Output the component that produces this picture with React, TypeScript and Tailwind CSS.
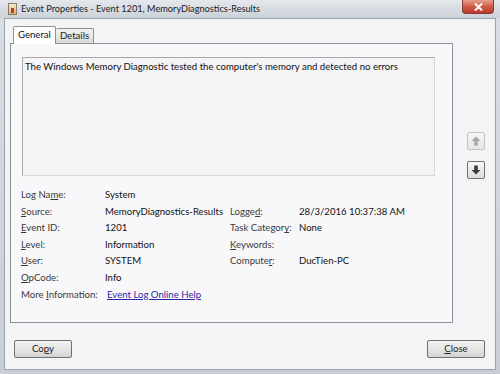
import React from "react";

const U = ({ c }: { c: string }) => <span className="underline underline-offset-[1px]">{c}</span>;

function Arrow({ dir, enabled }: { dir: "up" | "down"; enabled: boolean }) {
  const fill = enabled ? "#3c3c3c" : "#a8a8a8";
  return (
    <div
      className={
        "w-[18px] h-[18px] rounded-[2px] border flex items-center justify-center " +
        (enabled
          ? "border-[#6f6f6f] bg-gradient-to-b from-[#fafafa] to-[#dcdcdc]"
          : "border-[#c4c4c4] bg-gradient-to-b from-[#f6f6f6] to-[#e6e6e6]")
      }
    >
      <svg width="10" height="10" viewBox="0 0 10 10">
        {dir === "up" ? (
          <path d="M5 0.5 L9.5 5 L6.8 5 L6.8 9.5 L3.2 9.5 L3.2 5 L0.5 5 Z" fill={fill} />
        ) : (
          <path d="M5 9.5 L9.5 5 L6.8 5 L6.8 0.5 L3.2 0.5 L3.2 5 L0.5 5 Z" fill={fill} />
        )}
      </svg>
    </div>
  );
}

function Row({ a, b, c, d }: { a: React.ReactNode; b?: React.ReactNode; c?: React.ReactNode; d?: React.ReactNode }) {
  return (
    <div className="grid grid-cols-[84px_125px_69px_1fr] h-[16.6px] items-center">
      <div className="text-[#3a3a3a] whitespace-nowrap">{a}</div>
      <div className="text-[#111] whitespace-nowrap">{b}</div>
      <div className="text-[#3a3a3a] whitespace-nowrap">{c}</div>
      <div className="text-[#111] whitespace-nowrap">{d}</div>
    </div>
  );
}

export default function App() {
  return (
    <div
      className="w-[500px] h-[374px] flex flex-col bg-gradient-to-b from-[#d9dde4] to-[#c9ced6] overflow-hidden text-[9.6px]"
      style={{ fontFamily: 'Lato, "Open Sans", sans-serif' }}
    >
      {/* Title bar */}
      <div className="h-[18px] flex items-center shrink-0 bg-gradient-to-b from-[#e4e7ec] to-[#cdd2d9]">
        <div className="ml-[8px] w-[9px] h-[12px] border border-[#8a7a6a] bg-gradient-to-b from-[#f4e9c8] to-[#d9b86a] flex items-end justify-center">
          <div className="w-[3px] h-[5px] bg-[#c0392b] mb-[1px]" />
        </div>
        <div className="ml-[4px] text-[9.2px] text-[#1c1c1c] leading-none">Event Properties - Event 1201, MemoryDiagnostics-Results</div>
        <div className="ml-auto mr-[6px] self-start w-[32px] h-[14px] rounded-b-[4px] border border-t-0 border-[#8a3a30] bg-gradient-to-b from-[#e7a08f] via-[#cf5a48] to-[#b73a2a] flex items-center justify-center">
          <svg width="9" height="8" viewBox="0 0 9 8">
            <path d="M1 0.5 L8 7.5 M8 0.5 L1 7.5" stroke="#ffffff" strokeWidth="2" />
          </svg>
        </div>
      </div>

      {/* Client */}
      <div className="flex-1 mx-[4px] mb-[4px] border border-[#9aa2ad] bg-[#f4f3f6] flex flex-col">
        <div className="flex pl-[5px] pt-[6px]">
          {/* Tab control */}
          <div className="w-[443px] flex flex-col">
            <div className="flex items-end h-[18px] pl-[3px]">
              <div className="h-[18px] px-[4px] border border-b-0 border-[#8c9099] bg-white rounded-t-[2px] flex items-center text-[#111] relative z-10 -mb-px pb-px">
                General
              </div>
              <div className="h-[15px] px-[4px] border border-l-0 border-b-0 border-[#8c9099] bg-gradient-to-b from-[#f2f2f2] to-[#dadada] rounded-t-[2px] flex items-center text-[#222]">
                Details
              </div>
            </div>
            <div className="h-[280px] border border-[#8c9099] bg-[#f8f7f9] pt-[13px] pl-[11px]">
              <div className="w-[413px] h-[119px] border border-[#a7a7a7] border-r-[#d8d8d8] border-b-[#d8d8d8] bg-[#f5f4f7] pl-[2px] pt-[2px] text-[#111]">
                The Windows Memory Diagnostic tested the computer's memory and detected no errors
              </div>
              <div className="mt-[11px] ml-[-1px]">
                <Row a={<>Log Na<U c="m" />e:</>} b="System" />
                <Row a={<><U c="S" />ource:</>} b="MemoryDiagnostics-Results" c={<>Logge<U c="d" />:</>} d="28/3/2016 10:37:38 AM" />
                <Row a={<><U c="E" />vent ID:</>} b="1201" c={<>Task Categor<U c="y" />:</>} d="None" />
                <Row a={<><U c="L" />evel:</>} b="Information" c={<><U c="K" />eywords:</>} d="" />
                <Row a={<><U c="U" />ser:</>} b="SYSTEM" c={<>Compute<U c="r" />:</>} d="DucTien-PC" />
                <Row a={<><U c="O" />pCode:</>} b="Info" />
                <div className="h-[16.6px] flex items-center whitespace-nowrap">
                  <span className="w-[86px] text-[#3a3a3a]">More <U c="I" />nformation:</span>
                  <span className="text-[#2a2aa8] underline underline-offset-[1px]">Event Log Online Help</span>
                </div>
              </div>
            </div>
          </div>
          {/* Arrows */}
          <div className="ml-[14px] pt-[107px] flex flex-col gap-[11px]">
            <Arrow dir="up" enabled={false} />
            <Arrow dir="down" enabled={true} />
          </div>
        </div>

        {/* Buttons */}
        <div className="flex justify-between pl-[9px] pr-[10px] mt-[17px]">
          <div className="w-[58px] h-[18px] rounded-[2px] border border-[#707070] bg-gradient-to-b from-[#f2f2f2] via-[#e6e6e6] to-[#d2d2d2] flex items-center justify-center text-[#222]">
            Co<U c="p" />y
          </div>
          <div className="w-[58px] h-[18px] rounded-[2px] border border-[#707070] bg-gradient-to-b from-[#f2f2f2] via-[#e6e6e6] to-[#d2d2d2] flex items-center justify-center text-[#222]">
            <U c="C" />lose
          </div>
        </div>
      </div>
    </div>
  );
}
